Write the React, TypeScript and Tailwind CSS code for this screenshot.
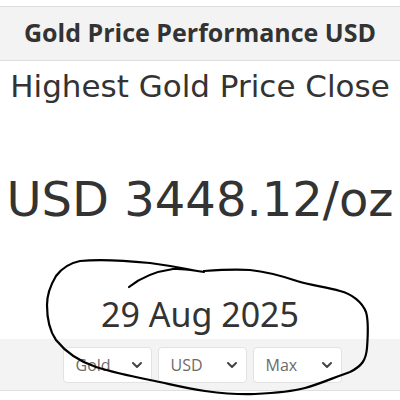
import React from 'react';

const selects = ['Gold', 'USD', 'Max'];

function Chevron() {
    return (
        <svg width="12" height="8" viewBox="0 0 12 8" fill="none" stroke="#444" strokeWidth="2" strokeLinecap="round" strokeLinejoin="round">
            <path d="M2 2 L6 6 L10 2" />
        </svg>
    );
}

export default function App() {
    return (
        <div className="relative w-[400px] h-[400px] bg-white overflow-hidden text-[#333]">
            <div className="h-[6px]" />
            {/* Title bar */}
            <div className="h-[55px] pt-[9px] bg-[#f3f3f3] border-y border-[#dddddd] text-center">
                <h1 className="text-[25px] leading-[33px] font-bold text-[#333]" style={{ fontFamily: '"Open Sans", sans-serif' }}>
                    Gold Price Performance USD
                </h1>
            </div>

            <p className="mt-[7px] text-center text-[31px] leading-[36px] whitespace-nowrap" style={{ fontFamily: '"DejaVu Sans", sans-serif' }}>
                Highest Gold Price Close
            </p>
            <p className="mt-[67px] text-center text-[48px] leading-[56px] whitespace-nowrap" style={{ fontFamily: '"DejaVu Sans", sans-serif' }}>
                USD 3448.12/oz
            </p>
            <p className="mt-[64px] text-center text-[34px] leading-[46px] whitespace-nowrap" style={{ fontFamily: '"Noto Sans", sans-serif' }}>
                29 Aug 2025
            </p>

            {/* Filters */}
            <div className="mt-[2px] h-[52px] bg-[#f3f3f3] border-b border-[#e0e0e0] flex justify-center items-center gap-[6px] pl-[4px]">
                {selects.map((s) => (
                    <div key={s} className="w-[89px] h-[36px] bg-white border border-[#e2e2e2] rounded-[4px] flex items-center justify-between pl-[12px] pr-[8px]">
                        <span className="text-[16px] text-[#6b6b6b]" style={{ fontFamily: '"Open Sans", sans-serif' }}>{s}</span>
                        <Chevron />
                    </div>
                ))}
            </div>

            {/* Hand-drawn annotation */}
            <svg className="absolute inset-0 pointer-events-none" width="400" height="400" viewBox="0 0 400 400" fill="none" stroke="#000" strokeWidth="2.2" strokeLinecap="round" strokeLinejoin="round">
                <path d="M129 287 C140 278 152 272 173 269 C185 268 195 271 204 272 C190 270 180 267 150 263 C130 261 100 259 80 261 C70 263 62 268 56 276 C50 286 47 296 47 305 C47 318 49 330 56 340 C64 350 78 361 96 367 C115 373 130 376 150 380 C170 384 185 388 205 391 C220 393 235 395 255 394 C275 393 290 392 305 388 C320 384 335 377 350 372 C362 366 366 360 367 348 C368 335 369 322 366 312 C362 302 352 294 340 291 C325 287 310 285 297 281 C285 277 270 272 250 270 C235 269 218 270 204 271" />
            </svg>
        </div>
    );
}
